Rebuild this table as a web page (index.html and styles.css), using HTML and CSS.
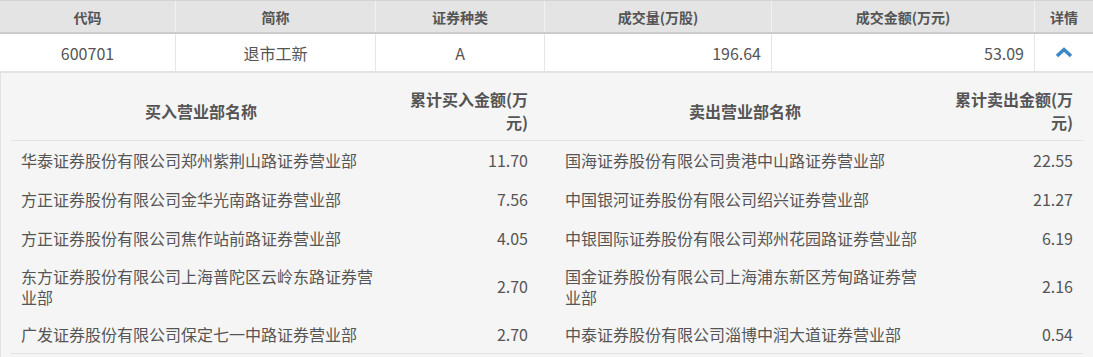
FILE: index.html
```html
<!DOCTYPE html>
<html lang="zh-CN">
<head>
<meta charset="utf-8">
<title>龙虎榜</title>
<link rel="stylesheet" href="styles.css">
</head>
<body>
<div class="board">
  <div class="main-row main-head">
    <div class="cell">代码</div>
    <div class="cell">简称</div>
    <div class="cell">证券种类</div>
    <div class="cell">成交量(万股)</div>
    <div class="cell">成交金额(万元)</div>
    <div class="cell">详情</div>
  </div>
  <div class="main-row main-data">
    <div class="cell">600701</div>
    <div class="cell">退市工新</div>
    <div class="cell">A</div>
    <div class="cell num">196.64</div>
    <div class="cell num">53.09</div>
    <div class="cell toggle">
      <svg width="18" height="11" viewBox="0 0 18 11"><polyline points="2,9 9,2.5 16,9" fill="none" stroke="#3a86c8" stroke-width="3.4" stroke-linejoin="miter"/></svg>
    </div>
  </div>
  <div class="detail">
    <div class="sub">
      <div class="sub-head">
        <div class="c1 th center">买入营业部名称</div>
        <div class="c2 th right"><span class="wrap">累计买入金额(万元)</span></div>
        <div class="c3 th center">卖出营业部名称</div>
        <div class="c4 th right"><span class="wrap">累计卖出金额(万元)</span></div>
      </div>
      <div class="sub-row">
        <div class="c1">华泰证券股份有限公司郑州紫荆山路证券营业部</div>
        <div class="c2 right">11.70</div>
        <div class="c3">国海证券股份有限公司贵港中山路证券营业部</div>
        <div class="c4 right">22.55</div>
      </div>
      <div class="sub-row">
        <div class="c1">方正证券股份有限公司金华光南路证券营业部</div>
        <div class="c2 right">7.56</div>
        <div class="c3">中国银河证券股份有限公司绍兴证券营业部</div>
        <div class="c4 right">21.27</div>
      </div>
      <div class="sub-row">
        <div class="c1">方正证券股份有限公司焦作站前路证券营业部</div>
        <div class="c2 right">4.05</div>
        <div class="c3">中银国际证券股份有限公司郑州花园路证券营业部</div>
        <div class="c4 right">6.19</div>
      </div>
      <div class="sub-row double">
        <div class="c1">东方证券股份有限公司上海普陀区云岭东路证券营业部</div>
        <div class="c2 right">2.70</div>
        <div class="c3">国金证券股份有限公司上海浦东新区芳甸路证券营业部</div>
        <div class="c4 right">2.16</div>
      </div>
      <div class="sub-row last">
        <div class="c1">广发证券股份有限公司保定七一中路证券营业部</div>
        <div class="c2 right">2.70</div>
        <div class="c3">中泰证券股份有限公司淄博中润大道证券营业部</div>
        <div class="c4 right">0.54</div>
      </div>
    </div>
  </div>
</div>
</body>
</html>
```
FILE: styles.css
```css
* { box-sizing: border-box; }
html, body { margin: 0; padding: 0; background: #ffffff; }
body {
  font-family: "Microsoft YaHei", "Noto Sans CJK SC", "Noto Sans", sans-serif;
  color: #555555;
}
.board { width: 1093px; }

.main-row {
  display: grid;
  grid-template-columns: 175px 200px 169px 227px 263px 59px;
}
.main-head {
  background: #e4e4e4;
  border-top: 1px solid #d4d4d4;
  border-bottom: 2px solid #cccccc;
  height: 34px;
  font-size: 14px;
  font-weight: bold;
}
.main-head .cell {
  display: flex;
  align-items: center;
  justify-content: center;
  border-left: 1px solid #f2f2f2;
}
.main-head .cell:first-child { border-left: 0; }
.main-data {
  height: 39px;
  font-size: 16px;
  border-bottom: 2px solid #e3e3e3;
}
.main-data .cell {
  display: flex;
  align-items: center;
  justify-content: center;
  border-left: 1px solid #e6e6e6;
}
.main-data .cell:first-child { border-left: 0; }
.main-data .num { justify-content: flex-end; padding-right: 10px; }
.main-data .toggle svg { display: block; }

.detail {
  background: #f5f5f5;
  border-left: 1px solid #e2e2e2;
  padding: 9px 10px 0 10px;
  height: 284px;
}
.sub { width: 1072px; }
.sub-head, .sub-row {
  display: grid;
  grid-template-columns: 378px 158px 394px 142px;
}
.sub-head {
  border-bottom: 1px solid #e3e3e3;
  font-size: 16px;
  font-weight: bold;
  line-height: 23px;
}
.sub-head > div {
  padding-top: 6px;
  padding-bottom: 6px;
  display: flex;
  align-items: center;
}
.sub-row {
  min-height: 39px;
  font-size: 16px;
  line-height: 21px;
}
.sub-row.double { min-height: 57px; }
.sub-row.last { border-bottom: 1px solid #e3e3e3; }
.sub-row > div {
  padding-top: 7px;
  padding-bottom: 7px;
  display: flex;
  align-items: center;
}
.c1 { padding-left: 10px; padding-right: 8px; }
.c2 { padding-left: 10px; padding-right: 19px; }
.c3 { padding-left: 18px; padding-right: 16px; }
.c4 { padding-left: 10px; padding-right: 10px; }
.center { justify-content: center; text-align: center; }
.right { justify-content: flex-end; text-align: right; }
.wrap { display: inline-block; max-width: 122px; text-align: right; }
```
